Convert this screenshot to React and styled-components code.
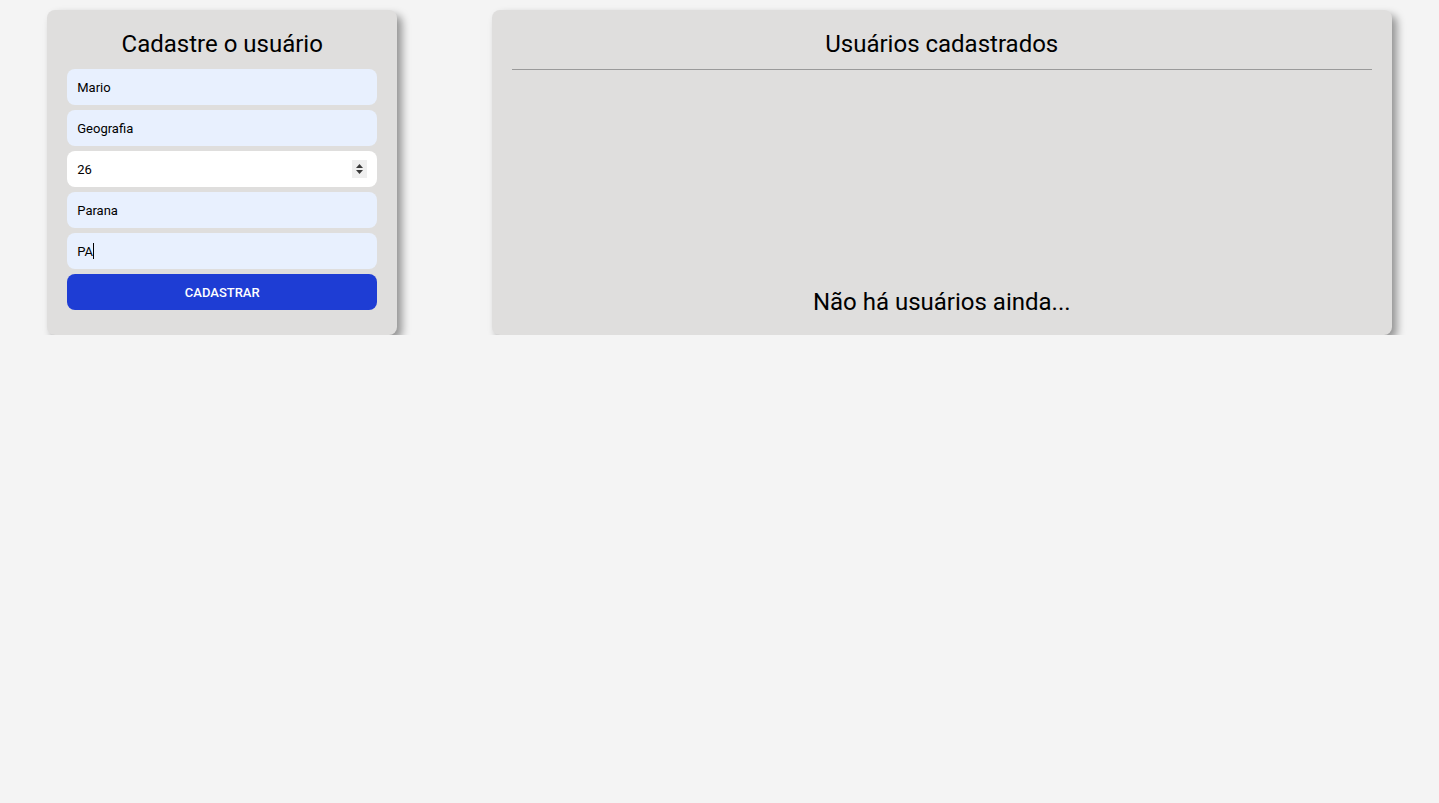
import React, { useState } from "react"
import styled, { createGlobalStyle } from "styled-components"

const GlobalStyle = createGlobalStyle`
  body {
    margin: 0;
    background: #f4f4f4;
    font-family: Roboto, "Noto Sans", sans-serif;
    color: #000;
  }
`

const Spinner = () => (
  <SpinBox>
    <svg width="9" height="12" viewBox="0 0 9 12">
      <path d="M4.5 1 L8 5 L1 5 Z" fill="#3a3a3a" />
      <path d="M4.5 11 L8 7 L1 7 Z" fill="#3a3a3a" />
    </svg>
  </SpinBox>
)

const App = () => {
  const [form, setForm] = useState({
    nome: "Mario",
    curso: "Geografia",
    idade: "26",
    cidade: "Parana",
    estado: "PA",
  })
  const [users] = useState([])

  const change = (key) => (e) => setForm({ ...form, [key]: e.target.value })

  return (
    <>
      <GlobalStyle />
      <Page>
        <Card width="350px" bottom="25px">
          <Title>Cadastre o usuário</Title>
          <Form onSubmit={(e) => e.preventDefault()}>
            <Input filled value={form.nome} onChange={change("nome")} />
            <Input filled value={form.curso} onChange={change("curso")} />
            <NumberField>
              <NumberInput value={form.idade} onChange={change("idade")} />
              <Spinner />
            </NumberField>
            <Input filled value={form.cidade} onChange={change("cidade")} />
            <CaretField>
              <CaretInput
                value={form.estado}
                size={Math.max(form.estado.length, 1)}
                onChange={change("estado")}
              />
              <Caret />
            </CaretField>
            <Button type="submit">Cadastrar</Button>
          </Form>
        </Card>

        <Card width="900px" bottom="19px">
          <Title>Usuários cadastrados</Title>
          <Divider />
          {users.length === 0 && <Empty>Não há usuários ainda...</Empty>}
        </Card>
      </Page>
    </>
  )
}

const Page = styled.div`
  display: flex;
  justify-content: space-around;
  align-items: stretch;
  padding-top: 10px;
`

const Card = styled.div`
  width: ${(props) => props.width};
  box-sizing: border-box;
  background: #dfdedd;
  border-radius: 8px;
  padding: 20px 20px ${(props) => props.bottom};
  box-shadow: 5px 5px 9px rgba(0, 0, 0, 0.4);
  display: flex;
  flex-direction: column;
`

const Title = styled.h2`
  margin: 0 0 11px;
  font-size: 24px;
  font-weight: 400;
  text-align: center;
  line-height: 28px;
`

const Form = styled.form`
  display: flex;
  flex-direction: column;
  gap: 5px;
`

const Input = styled.input`
  height: 36px;
  box-sizing: border-box;
  border: none;
  outline: none;
  border-radius: 8px;
  padding: 0 10px;
  font-family: Roboto, sans-serif;
  font-size: 13px;
  color: #000;
  caret-color: #000;
  background: ${(props) => (props.filled ? "#e8f0fe" : "#fff")};
`

const NumberField = styled.div`
  height: 36px;
  box-sizing: border-box;
  border-radius: 8px;
  background: #fff;
  display: flex;
  align-items: center;
  padding: 0 10px 0 0;
`

const NumberInput = styled(Input)`
  flex: 1;
  min-width: 0;
  background: transparent;
`

const CaretField = styled.label`
  height: 36px;
  box-sizing: border-box;
  border-radius: 8px;
  background: #e8f0fe;
  display: flex;
  align-items: center;
  padding-left: 10px;
`

const CaretInput = styled(Input)`
  padding: 0;
  width: auto;
  field-sizing: content;
  background: transparent;
  caret-color: transparent;
`

const Caret = styled.span`
  width: 1px;
  height: 16px;
  background: #000;
`

const SpinBox = styled.span`
  width: 15px;
  height: 18px;
  background: #efefef;
  display: flex;
  align-items: center;
  justify-content: center;
`

const Button = styled.button`
  height: 36px;
  border: none;
  border-radius: 8px;
  background: #1e3dd4;
  color: #fff;
  font-family: Roboto, sans-serif;
  font-size: 13px;
  font-weight: 500;
  text-transform: uppercase;
  cursor: pointer;
`

const Divider = styled.hr`
  margin: 0;
  border: none;
  border-top: 1px solid #9a9a9a;
`

const Empty = styled.p`
  margin: auto 0 0;
  font-size: 24px;
  line-height: 28px;
  text-align: center;
`

export default App
